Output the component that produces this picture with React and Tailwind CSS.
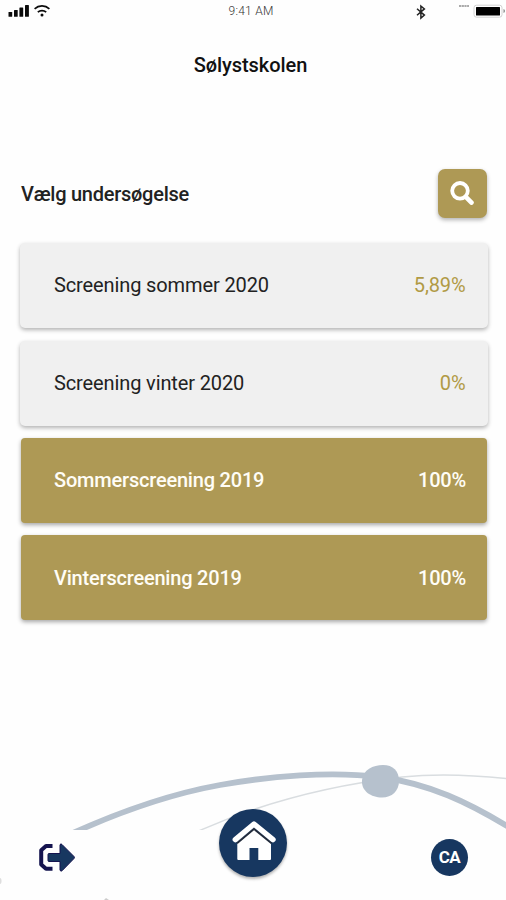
const surveys = [
  { name: 'Screening sommer 2020', value: '5,89%', done: false },
  { name: 'Screening vinter 2020', value: '0%', done: false },
  { name: 'Sommerscreening 2019', value: '100%', done: true },
  { name: 'Vinterscreening 2019', value: '100%', done: true },
];

function StatusBar() {
  return (
    <div className="relative flex h-6 items-start justify-center">
      <svg className="absolute left-0 top-0" width="60" height="24" viewBox="0 0 60 24">
        <g fill="#0b0b0b">
          <rect x="8.5" y="12" width="3.7" height="4.8" rx=".6" />
          <rect x="14" y="10" width="3.7" height="6.8" rx=".6" />
          <rect x="19.4" y="7.5" width="3.8" height="9.3" rx=".6" />
          <rect x="25" y="5" width="3.9" height="11.8" rx=".6" />
          <circle cx="42" cy="15" r="1.5" />
        </g>
        <g fill="none" stroke="#0b0b0b" strokeWidth="1.7">
          <path d="M34.6 8.8a11 11 0 0 1 14.8 0" />
          <path d="M37.8 12.2a6.2 6.2 0 0 1 8.4 0" />
        </g>
      </svg>
      <span className="mr-[4px] mt-[4px] text-[12px] font-light leading-[15px] tracking-[0.25px] text-[#333]">9:41 AM</span>
      <svg className="absolute right-0 top-0" width="100" height="24" viewBox="406 0 100 24">
        <path d="M417 8.8l7.4 6.3-3.5 3V6l3.5 2.9-7.4 6.4" fill="none" stroke="#222" strokeWidth="1.5" />
        <path d="M459 6h10" stroke="#aaa" strokeWidth="1.8" strokeDasharray="2.2 .5" />
        <rect x="474" y="5.2" width="28" height="12" rx="2.5" fill="#fff" stroke="#d2d2d2" strokeWidth="1" />
        <rect x="476" y="7" width="24" height="8.4" rx=".5" fill="#000" />
        <path d="M503.5 9v4q1.5-.4 1.5-2t-1.5-2" fill="#888" />
      </svg>
    </div>
  );
}

function SurveyCard({ name, value, done }) {
  return (
    <li
      className={
        done
          ? 'mx-[0.5px] flex h-[85px] items-center justify-between rounded-[4px] bg-[#ae9955] pb-[0.4px] pl-[33.5px] pr-[21px] text-[20px] font-medium tracking-[-0.2px] text-[#fffdf6] shadow-[0_2px_4px_rgba(0,0,0,0.35)]'
          : 'flex h-[85px] items-center justify-between rounded-[5px] bg-[#f0f0f0] pb-px pl-[34px] pr-[22px] text-[20px] tracking-[-0.12px] text-[#222] shadow-[0_2px_4px_rgba(0,0,0,0.3)]'
      }
    >
      <span>{name}</span>
      <span className={done ? '' : 'text-[#b09a45]'}>{value}</span>
    </li>
  );
}

export default function App() {
  return (
    <div className="relative flex h-[900px] w-[506px] flex-col overflow-hidden bg-[#fefefe] font-[Roboto,sans-serif]">
      <StatusBar />
      <h1 className="mt-[29px] pr-[5px] text-center text-[20px] font-medium leading-6 tracking-[-0.05px] text-[#111]">Sølystskolen</h1>
      <div className="mt-[92px] flex h-[49px] items-center justify-between pl-[21px] pr-[19px]">
        <h2 className="text-[20px] font-medium leading-6 tracking-[-0.25px] text-[#222]">Vælg undersøgelse</h2>
        <button className="flex h-[49px] w-[49px] items-center justify-center rounded-[7px] bg-[#ae9955] shadow-[0_2px_4px_rgba(0,0,0,0.3)]">
          <svg className="mb-[2px] mr-[2px]" width="24" height="24" viewBox="0 0 24 24" fill="none" stroke="#fff">
            <circle cx="10" cy="9.8" r="7.8" strokeWidth="3.8" />
            <path d="M15.8 15.8l5.7 5.8" strokeWidth="4.6" strokeLinecap="round" />
          </svg>
        </button>
      </div>
      <ul className="mt-[25.4px] flex flex-col gap-[12.3px] pl-5 pr-[18.5px]">
        {surveys.map((s) => (
          <SurveyCard key={s.name} name={s.name} value={s.value} done={s.done} />
        ))}
      </ul>

      <svg className="absolute left-0 top-[750px]" width="506" height="150" viewBox="0 750 506 150">
        <defs>
          <clipPath id="horizon">
            <rect x="0" y="750" width="506" height="80" />
          </clipPath>
        </defs>
        <g clipPath="url(#horizon)" fill="none">
          <path d="M192 834C270 798 350 783 402 777C440 773 475 775 510 779" stroke="#d9dde0" strokeWidth="1.5" />
          <path d="M62 838C120 811 170 794 220 785C270 776 330 771 380 777C430 784 468 802 512 829" stroke="#b6c1cd" strokeWidth="5.8" />
        </g>
        <path d="M362 780C363 770 373 765 383 765C393 765 399 771 399 781C399 791 392 797.5 382 797.5C371 797.5 361 791 362 780Z" fill="#b6c1cd" />
        <ellipse cx="0" cy="881" rx="1.5" ry="3" fill="#dedede" />
        <path d="M104 900l2-2 3 2" fill="#ccc" />
      </svg>

      <nav className="relative mb-[20px] mt-auto flex h-[71px] items-end justify-between px-[38px]">
        <svg className="mb-[8px]" width="38" height="30" viewBox="38 842 38 30">
          <path d="M52.5 846H46l-4.8 4.2v14.3l4.8 4.2H52.5" fill="none" stroke="#15144f" strokeWidth="4" strokeLinejoin="round" />
          <path d="M49 853.5h11v-8.5q.5-2 2-.5l12 12q1 1 0 2l-12 12.3q-1.5 1-2-.8v-8.5H49q-1 0-1-1v-6q0-1 1-1z" fill="#173760" stroke="#15144f" strokeWidth="1" />
        </svg>
        <button className="mb-[3px] ml-[-1px] flex h-[68px] w-[68px] items-center justify-center rounded-full bg-[#173760] shadow-[0_2px_3px_rgba(0,0,0,0.3)]">
          <svg width="68" height="68" viewBox="219 809 68 68">
            <path d="M237.3 842L254 828.5L271 842.5V859q0 1-1 1H258.3v-12h-8.8v12H238.3q-1 0-1-1z" fill="#fff" />
            <path d="M237 843.3L254 829L271.5 843.3" fill="none" stroke="#222b3b" strokeWidth="1.8" />
            <path d="M235.3 839.6L254 824L273 839.6" fill="none" stroke="#fff" strokeWidth="5.4" strokeLinecap="round" strokeLinejoin="round" />
          </svg>
        </button>
        <span className="mb-[4px] flex h-[37px] w-[37px] items-center justify-center rounded-full bg-[#173760] text-[17px] font-bold tracking-[-0.6px] text-white">CA</span>
      </nav>
    </div>
  );
}
